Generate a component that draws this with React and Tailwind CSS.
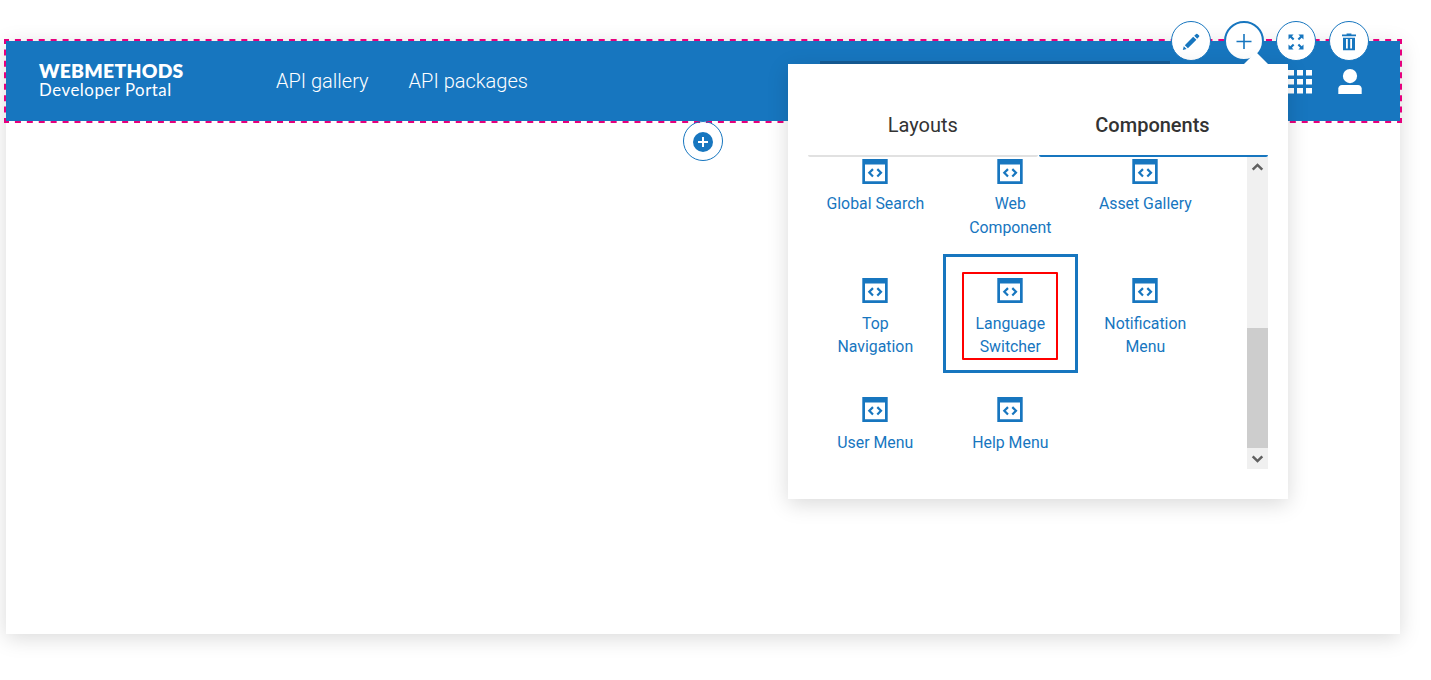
import React from "react";

function CodeWindowIcon() {
  return (
    <svg width="26" height="25" viewBox="0 0 26 25" className="mr-px block shrink-0" fill="none">
      <path fill="#1776bf" fillRule="evenodd" d="M0.3 0H25.7V25H0.3ZM3 5.4V22.2H23V5.4Z" />
      <path d="M11 10.1L7.3 13.8L11 17.5M15.3 10.1L19 13.8L15.3 17.5" stroke="#1776bf" strokeWidth="2.2" />
    </svg>
  );
}

function Item({ label, selected }) {
  return (
    <div
      className={
        "flex h-[119px] w-[135px] flex-col items-center border-[3px] pt-[21px] text-center text-[15.86px] leading-[23.6px] text-[#1776bf] " +
        (selected ? "border-[#1776bf]" : "border-transparent")
      }
    >
      <CodeWindowIcon />
      <div className="mt-[8.6px] mr-[0.4px] w-[102px]">{label}</div>
      {selected && (
        <div className="absolute top-[115px] left-[154px] h-[88px] w-[96px] rounded-[1px] border-2 border-[#ff0000]" />
      )}
    </div>
  );
}

function RoundButton({ label, active, className, children }) {
  return (
    <button
      aria-label={label}
      className={
        "flex size-10 items-center justify-center rounded-full bg-white border-[#1776bf] " +
        (active ? "border-2 " : "border ") +
        className
      }
    >
      {children}
    </button>
  );
}

function Toolbar() {
  return (
    <div className="absolute top-[21px] left-[1171px] flex">
      <RoundButton label="Edit" className="">
        <svg width="18" height="18" viewBox="0 0 18 18" fill="#1776bf" className="relative top-px">
          <path d="M.8 17L1.8 13.3L4.6 16.1ZM2.8 12.2L11.2 3.7L14.4 6.8L5.9 15.2ZM12.2 2.8L14.2 .9Q14.8 .4 15.4 .9L17.1 2.6Q17.6 3.2 17.1 3.8L15.2 5.8Z" />
        </svg>
      </RoundButton>
      <RoundButton label="Add" active className="ml-[13px]">
        <svg width="16" height="16" viewBox="0 0 16 16" stroke="#1776bf" strokeWidth="1.6">
          <path d="M8 1V16M.5 8.5H15.5" />
        </svg>
      </RoundButton>
      <RoundButton label="Expand" className="ml-3">
        <svg width="16" height="16" viewBox="0 0 16 16" fill="#1776bf" className="relative top-px">
          <path d="M.5 .5H5.6L3.9 2.2L6.4 4.8L4.9 6.3L2.3 3.8L.5 5.6ZM15.5 .5V5.6L13.7 3.8L11.1 6.3L9.6 4.8L12.1 2.2L10.4 .5ZM.5 15.5V10.4L2.3 12.2L4.9 9.7L6.4 11.2L3.9 13.8L5.6 15.5ZM15.5 15.5H10.4L12.1 13.8L9.6 11.2L11.1 9.7L13.7 12.2L15.5 10.4Z" />
        </svg>
      </RoundButton>
      <RoundButton label="Delete" className="ml-[13px]">
        <svg width="14" height="18" viewBox="0 0 14 18" fill="#1776bf" className="relative top-px">
          <path fillRule="evenodd" d="M0 1.4H4.6V.6H9.4V1.4H14V3.2H0ZM1 4.7H13V17.3H1ZM4 6V15.6H5.8V6ZM8.2 6V15.6H10V6Z" />
        </svg>
      </RoundButton>
    </div>
  );
}

function SelectionFrame() {
  return (
    <svg
      width="1398"
      height="84"
      viewBox="0 0 1398 84"
      stroke="#e6007e"
      strokeWidth="2"
      className="pointer-events-none absolute top-[-2px] left-[-2px] max-w-none"
    >
      <path d="M0 1H1398M0 83H1398" strokeDasharray="6 5.915" strokeDashoffset="1" />
      <path d="M1 0V84M1397 0V84" strokeDasharray="6 5.43" strokeDashoffset="1" />
    </svg>
  );
}

function Header() {
  return (
    <header className="relative flex h-20 bg-[#1776bf]">
      <SelectionFrame />
      <div className="w-[237px] pt-5 pl-[33px] font-[Lato,sans-serif] text-white">
        <div className="text-[19.3px] leading-[19px] font-extrabold tracking-[0.27px]">WEBMETHODS</div>
        <div className="text-[16.8px] leading-[19px] tracking-[0.55px]">Developer Portal</div>
      </div>
      <nav className="flex items-center gap-10 pl-[33px] text-[20px] font-light text-white">
        <a>API gallery</a>
        <a>API packages</a>
      </nav>
      <div className="mt-5 mr-[118px] ml-auto h-10 w-[350px] bg-[#155c96]" />
      <svg width="24" height="24" viewBox="0 0 24 24" fill="white" className="mt-[29px]">
        <path d="M0 0H6V5.6H0ZM9 0H15V5.6H9ZM18 0H24V5.6H18ZM0 9H6V14.4H0ZM9 9H15V14.4H9ZM18 9H24V14.4H18ZM0 18H6V23.4H0ZM9 18H15V23.4H9ZM18 18H24V23.4H18Z" />
      </svg>
      <svg width="24" height="26" viewBox="0 0 24 26" fill="white" className="mt-7 mr-[38px] ml-[26px]">
        <circle cx="12" cy="7.1" r="7.1" />
        <path d="M.3 25V19.5Q.8 16 4 16H20Q23.2 16 23.7 19.5V25Z" />
      </svg>
    </header>
  );
}

function Scrollbar() {
  return (
    <div className="flex w-[21px] flex-col items-center bg-[#f0f0f0]">
      <svg width="21" height="21" viewBox="0 0 21 21" fill="none" stroke="#606060" strokeWidth="2.5">
        <path d="M5.7 12.7L10.5 7.9L15.3 12.7" />
      </svg>
      <div className="mt-auto h-[120px] w-full bg-[#cdcdcd]" />
      <svg width="21" height="21" viewBox="0 0 21 21" fill="none" stroke="#606060" strokeWidth="2.5">
        <path d="M5.7 8.3L10.5 13.1L15.3 8.3" />
      </svg>
    </div>
  );
}

function Picker() {
  return (
    <div className="absolute top-16 left-[788px] h-[435px] w-[500px] bg-white px-5 pt-[31px] shadow-[0_5px_20px_rgba(0,0,0,0.15)]">
      <svg width="24" height="12" viewBox="0 0 24 12" fill="white" className="absolute top-[-12px] left-[456px]">
        <path d="M0 12L12 0L24 12Z" />
      </svg>
      <div className="flex gap-px text-center text-[20px] leading-[60px] text-[#333]">
        <div className="h-[62px] w-[229.5px] rounded-[2px] border-b-2 border-[#e1e1e1]">Layouts</div>
        <div className="h-[62px] w-[229px] rounded-[2px] border-b-2 border-[#1776bf] pr-px font-medium">Components</div>
      </div>
      <div className="relative flex h-[312px] justify-between overflow-hidden">
        <div className="mt-[-22.4px] grid auto-rows-[119.4px] grid-cols-[135px_135px_135px]">
          <Item label="Global Search" />
          <Item label="Web Component" />
          <Item label="Asset Gallery" />
          <Item label="Top Navigation" />
          <Item label="Language Switcher" selected />
          <Item label="Notification Menu" />
          <Item label="User Menu" />
          <Item label="Help Menu" />
        </div>
        <Scrollbar />
      </div>
    </div>
  );
}

export default function App() {
  return (
    <div className="relative h-[680px] w-[1431px] overflow-hidden bg-white pt-[41px] pl-[6px] font-[Roboto,sans-serif]">
      <main className="h-[593px] w-[1394px] bg-white shadow-[0_4px_20px_rgba(0,0,0,0.15)]">
        <Header />
        <button
          aria-label="Add section"
          className="relative ml-[677px] flex size-10 items-center justify-center rounded-full border border-[#1776bf]"
        >
          <svg width="20" height="20" viewBox="0 0 20 20" className="relative top-px">
            <circle cx="10" cy="10" r="10" fill="#1776bf" />
            <path d="M10 5V15M5 10H15" stroke="white" strokeWidth="2" />
          </svg>
        </button>
      </main>
      <Toolbar />
      <Picker />
    </div>
  );
}
